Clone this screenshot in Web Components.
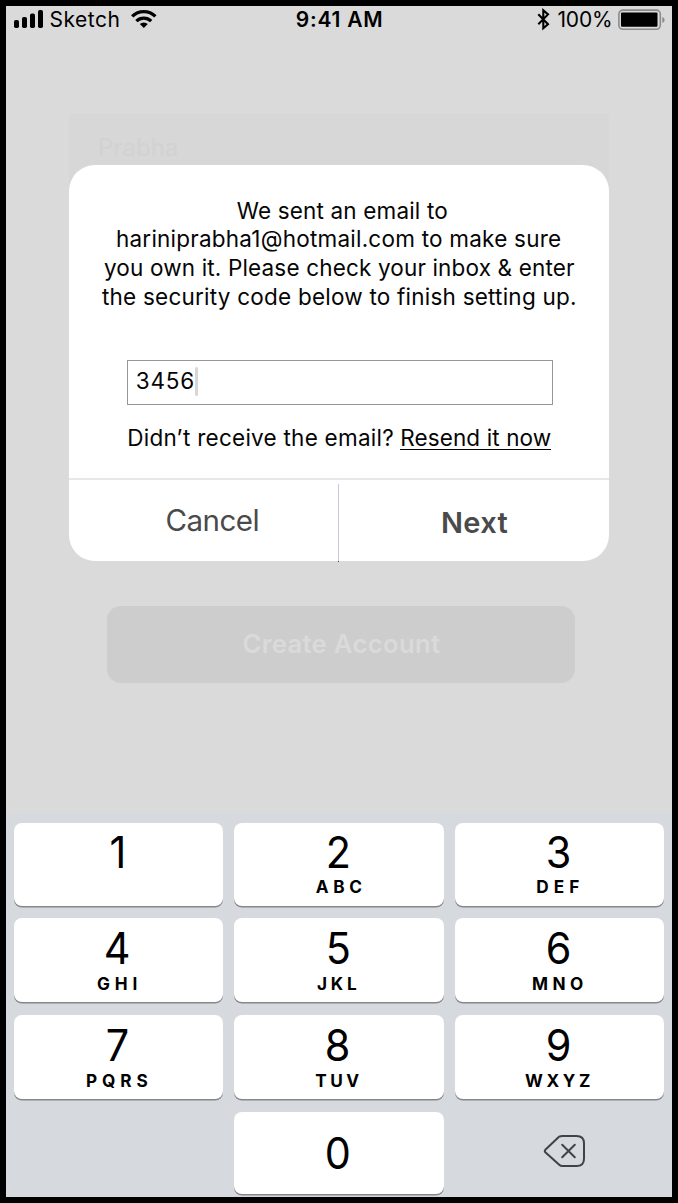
<!DOCTYPE html>
<html lang="en">
<head>
<meta charset="utf-8">
<title>Verify email</title>
<style>
html,body{margin:0;padding:0;background:#000}
body{font-family:Inter,"Liberation Sans",sans-serif;color:#050505}
</style>
</head>
<body>
<phone-screen>
  <status-bar slot="status"></status-bar>
  <signup-page slot="page"></signup-page>
  <code-dialog slot="dialog"></code-dialog>
  <number-pad slot="keyboard"></number-pad>
</phone-screen>
<script>
const shadow = (el, html) => { el.attachShadow({mode:'open'}).innerHTML = html; };
const ctx = document.createElement('canvas').getContext('2d');

/* One line of text; its tracking is set so that the glyphs span the width in "w". */
class FitText extends HTMLElement {
  connectedCallback() {
    const size = +this.getAttribute('size'), weight = this.getAttribute('weight') || 400;
    const h = this.getAttribute('h') || 28, w = +this.getAttribute('w');
    const text = this.textContent;
    let css = '';
    if (w) {
      ctx.font = `${weight} ${size}px Inter, "Liberation Sans", sans-serif`;
      const m = ctx.measureText(text);
      const ink = m.actualBoundingBoxLeft + m.actualBoundingBoxRight;
      css = `letter-spacing:${(w - ink) / (text.length - 1)}px;margin-left:${m.actualBoundingBoxLeft}px`;
    }
    shadow(this, `<style>
      :host{display:block;flex:none;height:${h}px;line-height:${h}px;${w ? `width:${w}px;` : ''}
        font-size:${size}px;font-weight:${weight};white-space:nowrap}
      span{display:block;${css}}
    </style><span><slot></slot></span>`);
  }
}
customElements.define('fit-text', FitText);

customElements.define('phone-screen', class extends HTMLElement {
  constructor(){ super(); shadow(this, `<style>
    :host{display:block;box-sizing:border-box;width:678px;height:1203px;padding:6px 6px 6px;background:#000}
    .screen{position:relative;height:1191px;display:flex;flex-direction:column;background:#dadada;overflow:hidden}
    .page{flex:1;min-height:0}
    .overlay{position:absolute;left:63.3px;top:158.7px}
  </style><div class="screen"><slot name="status"></slot><div class="page"><slot name="page"></slot></div>
  <slot name="keyboard"></slot><div class="overlay"><slot name="dialog"></slot></div></div>`); }
});

customElements.define('status-bar', class extends HTMLElement {
  constructor(){ super(); shadow(this, `<style>
    :host{display:grid;grid-template-columns:1fr auto 1fr;height:27px;padding:0 7px 0 8px;color:#000}
    div{display:flex}
    svg{display:block;flex:none}
    .r{justify-content:flex-end}
    .time{margin-left:-1px}
  </style>
  <div>
    <svg width="30" height="27"><rect x="0" y="14" width="5" height="8" rx="1.8"/><rect x="8" y="11" width="5" height="11" rx="1.8"/><rect x="16" y="7.5" width="5" height="14.5" rx="1.8"/><rect x="24" y="4" width="5" height="18" rx="1.8"/></svg>
    <fit-text size="21" h="28" w="68" style="margin-left:6.5px">Sketch</fit-text>
    <svg width="26" height="27" style="margin-left:12.5px"><g fill="none" stroke="#000" stroke-width="3.3"><path d="M1.2 10.4a16.5 16.5 0 0 1 23.2 0"/><path d="M5.4 15.1a10.6 10.6 0 0 1 14.8 0"/></g><path d="M8.8 18a5.8 5.8 0 0 1 8 0l-4 4z"/></svg>
  </div>
  <fit-text class="time" size="21" h="28" w="84.5" weight="580">9:41 AM</fit-text>
  <div class="r">
    <svg width="14" height="27"><path d="M1.3 8.3 11 18.2 6.3 22.3V4.3L11 8.4 1.3 18.2" fill="none" stroke="#000" stroke-width="2.1"/></svg>
    <fit-text size="21" h="28" w="53.5" style="margin:0 7px 0 6.5px">100%</fit-text>
    <svg width="47" height="27"><rect x=".9" y="4.1" width="41.4" height="19.2" rx="4" fill="none" stroke="#8b8b8b" stroke-width="1.6"/><rect x="3" y="6.5" width="36.5" height="14.3" rx="1"/><path d="M44.3 11v5.8c3-1 3-4.8 0-5.8" fill="#8b8b8b"/></svg>
  </div>`); }
});

customElements.define('signup-page', class extends HTMLElement {
  constructor(){ super(); shadow(this, `<style>
    :host{display:block;padding-top:81px}
    .form{box-sizing:border-box;margin-left:63px;width:539.5px;height:400px;padding:20px 0 0 31px;background:#d7d7d7;color:#d2d2d2}
    .btn{margin:92px 0 0 101px;width:468px;height:77px;border-radius:14px;background:#cdcdcd;color:#dadada;display:flex;justify-content:center}
    .btn fit-text{margin:22.5px 0 0 1.5px}
  </style>
  <div class="form"><fit-text size="24" h="28" w="77">Prabha</fit-text></div>
  <div class="btn"><fit-text size="25.7" weight="580" h="30.5" w="196.5">Create Account</fit-text></div>`); }
});

customElements.define('code-field', class extends HTMLElement {
  constructor(){ super(); shadow(this, `<style>
    :host{display:flex;flex:none;box-sizing:border-box;width:426px;height:45px;border:1px solid #95959b;padding:6px 0 0 8.5px}
    i{width:3px;height:29px;margin-left:2px;border-radius:1.5px;background:#d7d7d7}
  </style><slot></slot><i></i>`); }
});

customElements.define('code-dialog', class extends HTMLElement {
  constructor(){ super(); shadow(this, `<style>
    :host{display:flex;flex-direction:column;align-items:center;box-sizing:border-box;width:539.4px;height:396px;
      border-radius:26px;background:#fff;padding-top:32px}
    .first{margin-left:6px}
    .fourth{margin-left:-1px}
    code-field{margin-top:48.5px;margin-left:2.5px}
    .resend{display:flex;flex:none;gap:7px;height:28.7px;margin-top:18.8px;margin-left:1px}
    .link{border-bottom:1.8px solid #050505;height:25.9px;box-sizing:border-box;padding:0 0 0 1px}
    .actions{align-self:stretch;flex:none;box-sizing:border-box;display:grid;grid-template-columns:269px 1px 1fr;border-top:2px solid #e6e6eb;margin-top:25.5px;height:83px;color:#4a4a4a}
    .actions i{margin-top:4px;background:linear-gradient(#cac9df 77px,#555460 77px);height:78px}
    .actions fit-text{justify-self:center}
    .cancel{margin:21.7px 0 0 16.5px}
    .next{margin:26px 0 0 2.5px}
  </style>
  <fit-text class="first" size="22.5" h="28.7" w="210.5">We sent an email to</fit-text>
  <fit-text size="22.5" h="28.7" w="444">hariniprabha1@hotmail.com to make sure</fit-text>
  <fit-text size="22.5" h="28.7" w="470">you own it. Please check your inbox &amp; enter</fit-text>
  <fit-text class="fourth" size="22.5" h="28.7" w="473">the security code below to finish setting up.</fit-text>
  <code-field><fit-text size="22.5" h="28" w="56.5">3456</fit-text></code-field>
  <div class="resend"><fit-text size="22.5" h="28.7" w="265">Didn’t receive the email?</fit-text>
  <div class="link"><fit-text size="22.5" h="28.7" w="149.5">Resend it now</fit-text></div></div>
  <div class="actions"><fit-text class="cancel" size="29.5" h="36" w="91">Cancel</fit-text><i></i>
  <fit-text class="next" size="29" weight="580" h="34" w="64.5">Next</fit-text></div>`); }
});

customElements.define('pad-key', class extends HTMLElement {
  connectedCallback(){
    const w = this.getAttribute('w'), letters = this.getAttribute('letters');
    const dx = this.getAttribute('dx') || -1;
    shadow(this, `<style>
    :host{display:flex;flex-direction:column;align-items:center;box-sizing:border-box;border-radius:8px;background:#fff;
      box-shadow:0 1.5px 0 #85878a;padding-top:var(--top,2px);color:#000}
    .digit{margin-left:-2px;transform:scaleX(.94)}
    .letters{margin-top:var(--gap,-2.5px);margin-left:${dx}px}
    </style><fit-text class="digit" weight="380" size="44" h="54"><slot></slot></fit-text>
    ${letters ? `<fit-text class="letters" size="17.2" weight="660" h="20" w="${w}">${letters}</fit-text>` : ''}`);
  }
});

customElements.define('number-pad', class extends HTMLElement {
  constructor(){ super(); shadow(this, `<style>
    :host{display:grid;box-sizing:border-box;flex:none;height:384.3px;background:#d6d9de;padding:10.3px 8px 0;
      grid-template-columns:repeat(3,209.3px);column-gap:11px;grid-template-rows:82.5px 84px 84px 82.3px;row-gap:12.8px}
    .mid{--top:3px;--gap:-1.2px}
    .zero{--top:14.6px;grid-column:2}
    svg{display:block;margin:22.5px 0 0 88px}
  </style>
  <pad-key>1</pad-key>
  <pad-key letters="ABC" w="45.5">2</pad-key>
  <pad-key letters="DEF" w="42" dx="-2">3</pad-key>
  <pad-key class="mid" letters="GHI" w="39.5" dx="-4">4</pad-key>
  <pad-key class="mid" letters="JKL" w="40" dx="-4">5</pad-key>
  <pad-key class="mid" letters="MNO" w="50" dx="-2.5">6</pad-key>
  <pad-key class="mid" letters="PQRS" w="60.5" dx="-3">7</pad-key>
  <pad-key class="mid" letters="TUV" w="44" dx="-3.5">8</pad-key>
  <pad-key class="mid" letters="WXYZ" w="65" dx="-3.5">9</pad-key>
  <pad-key class="zero">0</pad-key>
  <svg width="44" height="36" fill="none" stroke="#3f4347" stroke-width="2"><path d="M16.2 2.6Q17.6 1.9 19.5 1.9H33.5Q41 1.9 41 9.2V24.8Q41 32.1 33.5 32.1H19.5Q17.6 32.1 16.2 30.8L2.6 18.6Q1 17 2.6 15.4L15.2 3.5Q15.7 2.9 16.2 2.6Z"/><path d="M19.2 10.8 31.8 23.3M31.8 10.8 19.2 23.3" stroke-linecap="round"/></svg>`); }
});
</script>
</body>
</html>
